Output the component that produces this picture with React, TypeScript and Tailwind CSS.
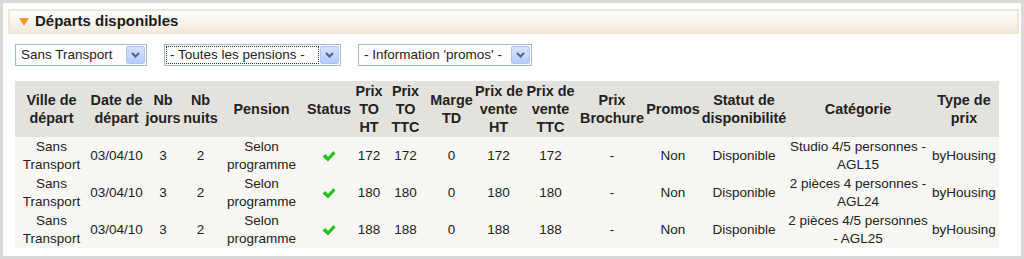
import React from "react";

interface Row {
    ville: [string, string];
    date: string;
    jours: string;
    nuits: string;
    prixHT: string;
    prixTTC: string;
    marge: string;
    venteHT: string;
    venteTTC: string;
    brochure: string;
    promos: string;
    statut: string;
    categorie: [string, string];
    type: string;
}

const rows: Row[] = [
    {
        ville: ["Sans", "Transport"], date: "03/04/10", jours: "3", nuits: "2",
        prixHT: "172", prixTTC: "172", marge: "0", venteHT: "172", venteTTC: "172",
        brochure: "-", promos: "Non", statut: "Disponible",
        categorie: ["Studio 4/5 personnes -", "AGL15"], type: "byHousing",
    },
    {
        ville: ["Sans", "Transport"], date: "03/04/10", jours: "3", nuits: "2",
        prixHT: "180", prixTTC: "180", marge: "0", venteHT: "180", venteTTC: "180",
        brochure: "-", promos: "Non", statut: "Disponible",
        categorie: ["2 pièces 4 personnes -", "AGL24"], type: "byHousing",
    },
    {
        ville: ["Sans", "Transport"], date: "03/04/10", jours: "3", nuits: "2",
        prixHT: "188", prixTTC: "188", marge: "0", venteHT: "188", venteTTC: "188",
        brochure: "-", promos: "Non", statut: "Disponible",
        categorie: ["2 pièces 4/5 personnes", "- AGL25"], type: "byHousing",
    },
];

// column headers, one entry per line
const headers: string[][] = [
    ["Ville de", "départ"],
    ["Date de", "départ"],
    ["Nb", "jours"],
    ["Nb", "nuits"],
    ["Pension"],
    ["Status"],
    ["Prix", "TO", "HT"],
    ["Prix", "TO", "TTC"],
    ["Marge", "TD"],
    ["Prix de", "vente", "HT"],
    ["Prix de", "vente", "TTC"],
    ["Prix", "Brochure"],
    ["Promos"],
    ["Statut de", "disponibilité"],
    ["Catégorie"],
    ["Type de", "prix"],
];

function DropButton() {
    return (
        <span className="flex h-[18px] w-[19px] shrink-0 items-center justify-center rounded-[2px] border border-[#b2c5f0] bg-gradient-to-b from-[#d5e2fe] to-[#b7cbf8]">
            <svg width="9" height="6" viewBox="0 0 9 6">
                <path d="M1 1 L4.5 4.5 L8 1" fill="none" stroke="#4d6185" strokeWidth="2" />
            </svg>
        </span>
    );
}

function FakeSelect({ label, width, focused = false }: { label: string; width: string; focused?: boolean }) {
    return (
        <div className={`flex h-[22px] items-center border border-[#a5b9d6] bg-white pr-px ${width}`}>
            {focused ? (
                <span className="mx-px flex h-[18px] flex-1 items-center border border-dotted border-[#333] pl-[3px]">
                    {label}
                </span>
            ) : (
                <span className="flex-1 pl-[5px]">{label}</span>
            )}
            <DropButton />
        </div>
    );
}

function Check() {
    return (
        <svg width="14" height="12" viewBox="0 0 14 12" className="mx-auto">
            <path d="M0.5 6.5 L3.5 4 L6 7 L11.5 1 L13.5 3.5 L6 11.5 Z" fill="#1ec41a" />
        </svg>
    );
}

export default function App() {
    const colWidths = [
        "w-[73px]", "w-[57px]", "w-[36px]", "w-[39px]", "w-[83px]", "w-[52px]",
        "w-[28px]", "w-[45px]", "w-[47px]", "w-[47px]", "w-[57px]", "w-[66px]",
        "w-[56px]", "w-[86px]", "w-[142px]", "w-[70px]",
    ];

    return (
        <div className="h-[259px] w-[1024px] overflow-hidden border-[3px] border-[#d9d9d9] bg-white font-['Liberation_Sans',Arial,sans-serif] text-[13.5px] text-[#222]">
            {/* title bar */}
            <div className="ml-[5px] mr-[2px] mt-[6px] flex h-[25px] items-center border-2 border-[#f0e6d6] bg-gradient-to-b from-white to-[#f2e9dc] pl-[9px]">
                <svg width="10" height="8" viewBox="0 0 10 8" className="mr-[6px]">
                    <polygon points="0,0 10,0 5,8" fill="#f7962a" />
                </svg>
                <span className="text-[15px] font-bold text-[#1b1b1b]">Départs disponibles</span>
            </div>

            {/* filters */}
            <div className="ml-[12px] mt-[10px] flex gap-[17px]">
                <FakeSelect label="Sans Transport" width="w-[132px]" />
                <FakeSelect label="- Toutes les pensions -" width="w-[177px]" focused />
                <FakeSelect label="- Information 'promos' -" width="w-[174px]" />
            </div>

            {/* departures table */}
            <table className="ml-[12px] mt-[15px] w-[984px] table-fixed border-collapse text-center leading-[18px]">
                <colgroup>
                    {colWidths.map((w, i) => (
                        <col key={i} className={w} />
                    ))}
                </colgroup>
                <thead>
                    <tr className="h-[56px] bg-[#e4e2dc]">
                        {headers.map((lines, i) => (
                            <th key={i} className="p-0 align-middle text-[14.4px] font-bold whitespace-nowrap">
                                {lines.map((l, j) => (
                                    <div key={j}>{l}</div>
                                ))}
                            </th>
                        ))}
                    </tr>
                </thead>
                <tbody>
                    {rows.map((r, i) => (
                        <tr key={i} className="h-[37px] bg-[#f8f7f4] align-middle">
                            <td className="p-0">
                                <div>{r.ville[0]}</div>
                                <div>{r.ville[1]}</div>
                            </td>
                            <td className="p-0">{r.date}</td>
                            <td className="p-0">{r.jours}</td>
                            <td className="p-0">{r.nuits}</td>
                            <td className="p-0">
                                <div>Selon</div>
                                <div>programme</div>
                            </td>
                            <td className="p-0"><Check /></td>
                            <td className="p-0">{r.prixHT}</td>
                            <td className="p-0">{r.prixTTC}</td>
                            <td className="p-0">{r.marge}</td>
                            <td className="p-0">{r.venteHT}</td>
                            <td className="p-0">{r.venteTTC}</td>
                            <td className="p-0">{r.brochure}</td>
                            <td className="p-0">{r.promos}</td>
                            <td className="p-0">{r.statut}</td>
                            <td className="p-0 whitespace-nowrap">
                                <div>{r.categorie[0]}</div>
                                <div>{r.categorie[1]}</div>
                            </td>
                            <td className="p-0">{r.type}</td>
                        </tr>
                    ))}
                </tbody>
            </table>
        </div>
    );
}
